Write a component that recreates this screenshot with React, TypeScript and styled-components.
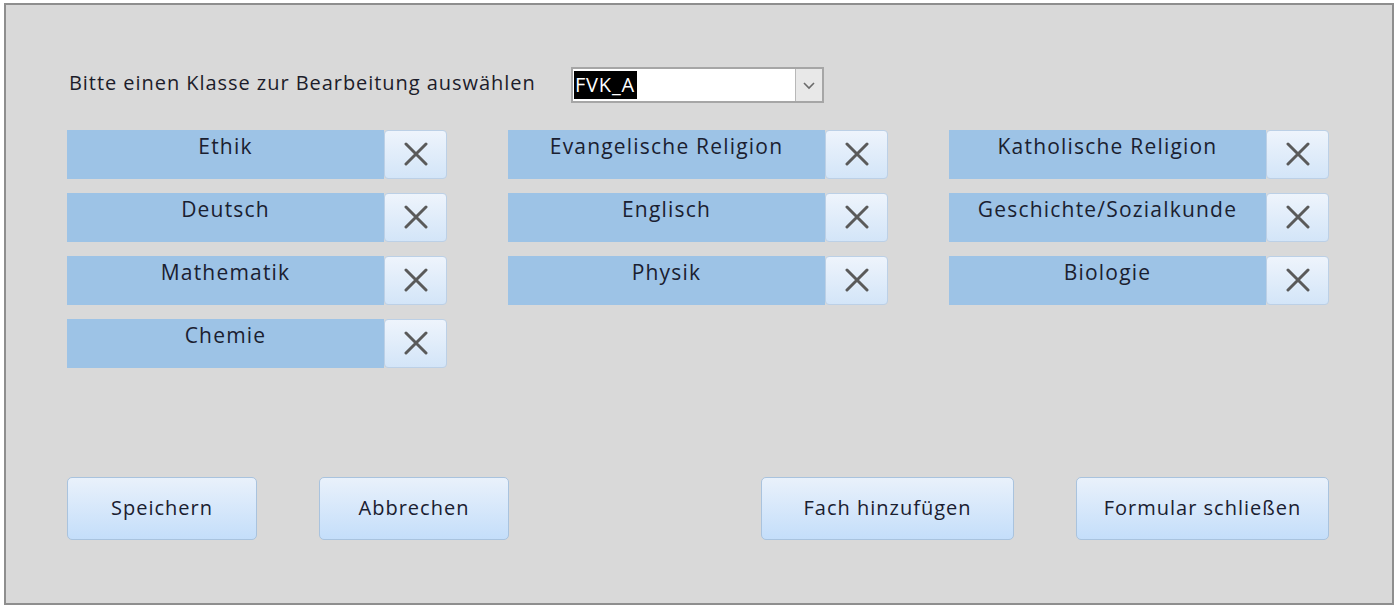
import React from "react";
import styled, { createGlobalStyle } from "styled-components";

const GlobalStyle = createGlobalStyle`
  html, body {
    margin: 0;
    padding: 0;
    background: #ffffff;
  }
  body {
    font-family: "Open Sans", "Noto Sans", sans-serif;
  }
`;

const Frame = styled.div`
  box-sizing: border-box;
  margin: 3px 0 0 4px;
  width: 1390px;
  height: 602px;
  border: 2px solid #8e8e8e;
  background: #d9d9d9;
  padding: 62px 0 0 61px;
  display: flex;
  flex-direction: column;
`;

const HeaderRow = styled.div`
  display: flex;
  align-items: center;
  height: 36px;
`;

const Label = styled.span`
  font-size: 20px;
  letter-spacing: 0.95px;
  color: #1c1c2a;
  width: 502px;
  padding-left: 2px;
  padding-bottom: 6px;
  white-space: nowrap;
`;

const Combo = styled.div`
  box-sizing: border-box;
  width: 253px;
  height: 36px;
  border: 2px solid #a6a6a6;
  background: #ffffff;
  display: flex;
  align-items: stretch;
`;

const ComboValue = styled.div`
  flex: 1;
  display: flex;
  align-items: center;
  padding-left: 1px;
`;

const Selected = styled.span`
  background: #000000;
  color: #ffffff;
  font-size: 20px;
  letter-spacing: 0.8px;
  line-height: 28px;
  padding: 0 2px 0 1px;
`;

const ComboButton = styled.div`
  width: 26px;
  border-left: 1px solid #b8b8b8;
  background: #e8e8e8;
  display: flex;
  align-items: center;
  justify-content: center;
`;

const SubjectGrid = styled.div`
  margin-top: 27px;
  display: grid;
  grid-template-columns: repeat(3, 380px);
  column-gap: 61px;
  row-gap: 14.5px;
`;

const SubjectRow = styled.div`
  display: flex;
  height: 48.5px;
`;

const SubjectName = styled.div`
  flex: 1;
  background: #9dc3e6;
  color: #1a2030;
  font-size: 21px;
  letter-spacing: 1.2px;
  text-align: center;
  white-space: nowrap;
  padding-top: 2px;
  line-height: 28px;
`;

const RemoveButton = styled.button`
  box-sizing: border-box;
  width: 63px;
  height: 100%;
  border: 1px solid #bcd0e6;
  border-radius: 4px;
  background: linear-gradient(#eef4fc, #d3e5f8);
  display: flex;
  align-items: center;
  justify-content: center;
  padding: 0 0 1px;
`;

const ButtonBar = styled.div`
  margin-top: auto;
  margin-bottom: 63px;
  display: flex;
`;

const ActionButton = styled.button<{ $width: number; $gap: number }>`
  box-sizing: border-box;
  width: ${(p) => p.$width}px;
  height: 63px;
  margin-right: ${(p) => p.$gap}px;
  border: 1px solid #a9c3de;
  border-radius: 5px;
  background: linear-gradient(#e9f1fb, #c4defa);
  font-family: "Open Sans", "Noto Sans", sans-serif;
  font-size: 20px;
  letter-spacing: 1px;
  color: #1a2030;
  white-space: nowrap;
  padding: 0 0 3px;
`;

const XIcon = () => (
  <svg width="26" height="24" viewBox="0 0 26 24">
    <path
      d="M3 2 L23 22 M23 2 L3 22"
      stroke="#5a5a5a"
      strokeWidth="3"
      strokeLinecap="round"
      fill="none"
    />
  </svg>
);

const Chevron = () => (
  <svg width="14" height="10" viewBox="0 0 14 10">
    <path d="M2 3 L7 8 L12 3" stroke="#6a6a6a" strokeWidth="1.6" fill="none" />
  </svg>
);

const subjects = [
  "Ethik",
  "Evangelische Religion",
  "Katholische Religion",
  "Deutsch",
  "Englisch",
  "Geschichte/Sozialkunde",
  "Mathematik",
  "Physik",
  "Biologie",
  "Chemie",
];

export default function App() {
  return (
    <>
      <GlobalStyle />
      <Frame>
        <HeaderRow>
          <Label>Bitte einen Klasse zur Bearbeitung auswählen</Label>
          <Combo>
            <ComboValue>
              <Selected>FVK_A</Selected>
            </ComboValue>
            <ComboButton>
              <Chevron />
            </ComboButton>
          </Combo>
        </HeaderRow>

        <SubjectGrid>
          {subjects.map((s) => (
            <SubjectRow key={s}>
              <SubjectName>{s}</SubjectName>
              <RemoveButton>
                <XIcon />
              </RemoveButton>
            </SubjectRow>
          ))}
        </SubjectGrid>

        <ButtonBar>
          <ActionButton $width={190} $gap={62}>Speichern</ActionButton>
          <ActionButton $width={190} $gap={252}>Abbrechen</ActionButton>
          <ActionButton $width={253} $gap={62}>Fach hinzufügen</ActionButton>
          <ActionButton $width={253} $gap={0}>Formular schließen</ActionButton>
        </ButtonBar>
      </Frame>
    </>
  );
}
